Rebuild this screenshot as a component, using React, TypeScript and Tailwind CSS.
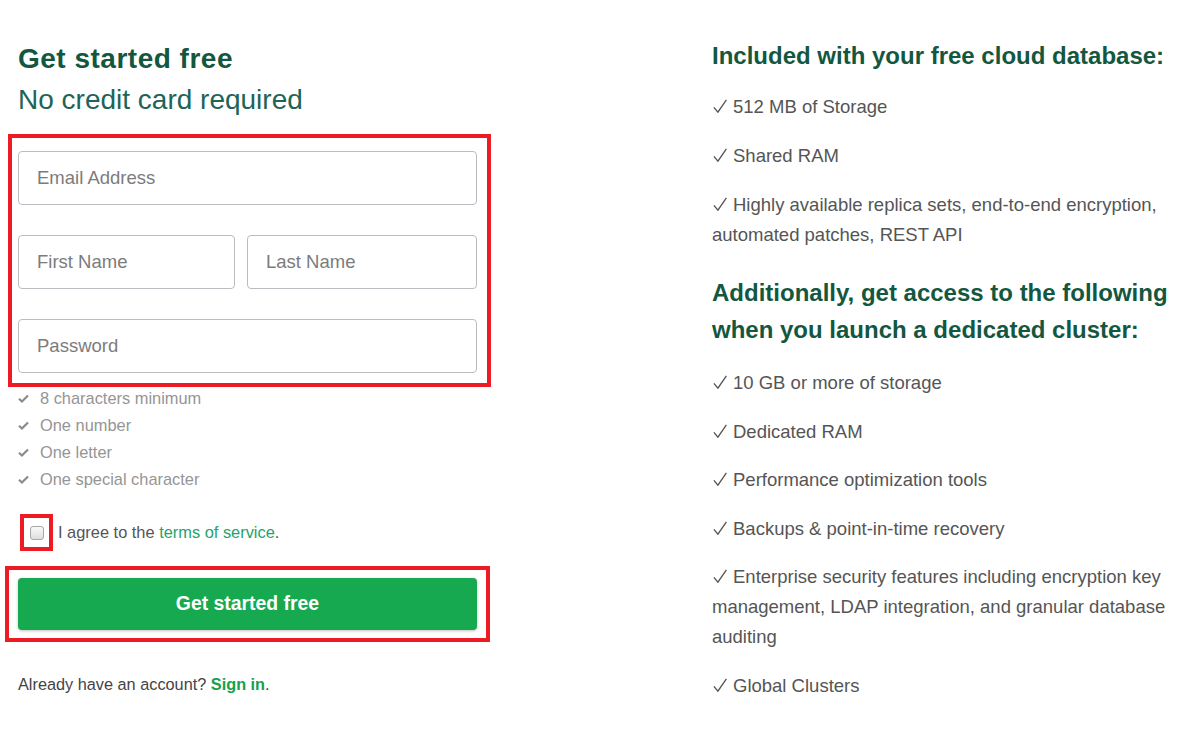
import React from "react";

const freeItems = [
  "512 MB of Storage",
  "Shared RAM",
  "Highly available replica sets, end-to-end encryption, automated patches, REST API",
];

const dedicatedItems = [
  "10 GB or more of storage",
  "Dedicated RAM",
  "Performance optimization tools",
  "Backups & point-in-time recovery",
  "Enterprise security features including encryption key management, LDAP integration, and granular database auditing",
  "Global Clusters",
];

const rules = ["8 characters minimum", "One number", "One letter", "One special character"];

function Check() {
  return (
    <svg width="11" height="9" viewBox="0 0 12 10" className="shrink-0">
      <path d="M1 5.2 L4.3 8.3 L11 1.6" fill="none" stroke="#8a8a8a" strokeWidth="2.4" />
    </svg>
  );
}

function Tick() {
  return (
    <svg width="14" height="14" viewBox="0 0 14 14" className="inline-block align-baseline ml-[1px] mr-[6px]">
      <path d="M0.9 8.4 L4.9 13.2 L13.4 0.8" fill="none" stroke="#555555" strokeWidth="1.35" />
    </svg>
  );
}

function Feature({ text }: { text: string }) {
  return (
    <li className="text-[18.5px] leading-[30px] text-[#555555]">
      <Tick />
      {text}
    </li>
  );
}

export default function App() {
  return (
    <main
      className="w-[1200px] h-[741px] bg-white flex overflow-hidden"
      style={{ fontFamily: '"Liberation Sans", Arial, sans-serif' }}
    >
      {/* left: form */}
      <div className="w-[500px] pt-[42px]">
        <h1 className="pl-[18px] text-[28px] leading-[34px] tracking-[0.5px] font-bold text-[#13573f]">
          Get started free
        </h1>
        <p className="pl-[18px] mt-[8px] text-[28px] leading-[32px] text-[#1e6458]">
          No credit card required
        </p>

        <div className="mt-[18px] ml-[8px] w-[483px] border-4 border-[#ed1c24] pl-[6px] pr-[10px] pt-[13px] pb-[10px] flex flex-col gap-[30px]">
          <input
            placeholder="Email Address"
            className="w-full h-[54px] border border-[#b9bdc1] rounded-[4px] px-[18px] text-[18.5px] placeholder:text-[#7c7c7c] outline-none"
          />
          <div className="flex gap-[12px]">
            <input
              placeholder="First Name"
              className="w-[217px] h-[54px] border border-[#b9bdc1] rounded-[4px] px-[18px] text-[18.5px] placeholder:text-[#7c7c7c] outline-none"
            />
            <input
              placeholder="Last Name"
              className="flex-1 min-w-0 h-[54px] border border-[#b9bdc1] rounded-[4px] px-[18px] text-[18.5px] placeholder:text-[#7c7c7c] outline-none"
            />
          </div>
          <input
            type="password"
            placeholder="Password"
            className="w-full h-[54px] border border-[#b9bdc1] rounded-[4px] px-[18px] text-[18.5px] placeholder:text-[#7c7c7c] outline-none"
          />
        </div>

        <ul className="pl-[18px] -mt-[2px]">
          {rules.map((r) => (
            <li key={r} className="flex items-center gap-[11px] h-[27px] text-[16.4px] text-[#959595]">
              <Check />
              {r}
            </li>
          ))}
        </ul>

        <div className="flex items-center mt-[21px]">
          <div className="ml-[20px] w-[33px] h-[37px] border-4 border-[#ed1c24] flex items-center justify-center">
            <span className="w-[14px] h-[14px] rounded-[3px] border border-[#a6a6a6] bg-gradient-to-b from-[#fafafa] to-[#dedede]" />
          </div>
          <span className="ml-[5px] text-[16.4px] text-[#555555]">
            I agree to the <span className="text-[#23a36b]">terms of service</span>.
          </span>
        </div>

        <div className="mt-[15px] ml-[5px] w-[485px] h-[76px] border-4 border-[#ed1c24] pl-[9px] pr-[4px] pt-[8px]">
          <button className="w-[459px] h-[52px] rounded-[4px] bg-[#17a94f] shadow-[0_1px_3px_rgba(0,0,0,0.25)] text-white text-[19.4px] font-bold">
            Get started free
          </button>
        </div>

        <p className="pl-[18px] mt-[30px] text-[16.3px] text-[#444444]">
          Already have an account? <span className="font-bold text-[#16a04c]">Sign in</span>.
        </p>
      </div>

      {/* right: plan features */}
      <div className="ml-[212px] w-[470px] pt-[37px]">
        <h2 className="text-[24px] leading-[37px] font-bold text-[#13573f]">
          Included with your free cloud database:
        </h2>
        <ul className="mt-[18px] flex flex-col gap-[19px]">
          {freeItems.map((t) => (
            <Feature key={t} text={t} />
          ))}
        </ul>
        <h2 className="mt-[24px] text-[24px] leading-[37px] font-bold text-[#13573f]">
          Additionally, get access to the following when you launch a dedicated cluster:
        </h2>
        <ul className="mt-[20px] flex flex-col gap-[18.6px]">
          {dedicatedItems.map((t) => (
            <Feature key={t} text={t} />
          ))}
        </ul>
      </div>
    </main>
  );
}
